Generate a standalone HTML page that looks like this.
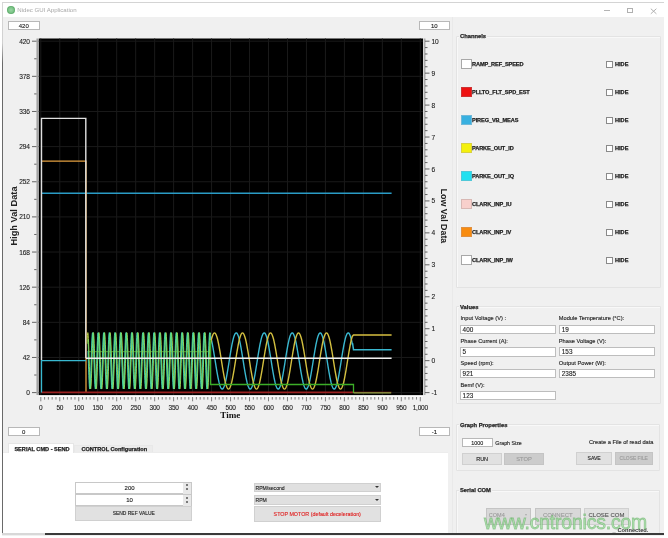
<!DOCTYPE html>
<html><head><meta charset="utf-8">
<style>
*{margin:0;padding:0;box-sizing:border-box}
html,body{width:668px;height:538px;overflow:hidden;background:#fff}
body{position:relative;font-family:"Liberation Sans",sans-serif;color:#222}
#all{position:absolute;left:0;top:0;width:668px;height:538px;filter:blur(0.5px)}
.abs{position:absolute}
#win{position:absolute;left:2px;top:2.5px;width:662px;height:533px;background:#f0f0f0;border-top:1px solid #cfcfcf}
#lb{position:absolute;left:2px;top:3px;width:1px;height:532px;background:linear-gradient(#d8d8d8 0px,#d0d0d0 40px,#6a6a6a 60px,#6a6a6a 100%)}
#title{position:absolute;left:0;top:3px;width:664px;height:14px;background:#fff}
.yl{position:absolute;left:12.5px;width:17.2px;text-align:right;font-size:6.6px;letter-spacing:-0.2px;line-height:9px;color:#1a1a1a;-webkit-text-stroke:0.1px #1a1a1a}
.yr{position:absolute;left:431.5px;width:20px;text-align:left;font-size:6.6px;letter-spacing:-0.2px;line-height:9px;color:#1a1a1a;-webkit-text-stroke:0.1px #1a1a1a}
.xl{position:absolute;top:402.5px;width:30px;text-align:center;font-size:6.5px;letter-spacing:-0.2px;line-height:9px;color:#1a1a1a;-webkit-text-stroke:0.1px #1a1a1a}
.inp{position:absolute;background:#fff;border:1px solid #b8b8b8;font-size:6px;line-height:8.6px;text-align:center;color:#222}
.grp{position:absolute;border:1px solid #e3e3e3;border-radius:1px;box-shadow:inset 1px 1px 0 #f8f8f8}
.gt{position:absolute;font-size:5.8px;font-weight:bold;color:#222;line-height:8px}
.ch{position:absolute;left:461px;width:180px;height:11px}
.sw{position:absolute;left:0;top:0;width:11px;height:10px;border:1px solid #a8a8a8}
.cn{position:absolute;left:11px;top:1.2px;font-size:5.6px;font-weight:bold;color:#222;line-height:8px;letter-spacing:-0.1px}
.cb{position:absolute;left:145px;top:1.5px;width:7px;height:7px;border:1px solid #8a8a8a;background:#fff}
.hd{position:absolute;left:154px;top:0.9px;font-size:5.6px;font-weight:bold;color:#222;line-height:8px}
.lab{position:absolute;font-size:5.7px;color:#222;line-height:8px;-webkit-text-stroke:0.15px #333}
.vb{position:absolute;background:#fff;border:1px solid #bdbdbd;font-size:6.4px;color:#222;line-height:8px;padding-left:1.6px}
.btn{position:absolute;background:#e1e1e1;border:1px solid #d0d0d0;font-size:6px;color:#222;text-align:center;line-height:11px}
.dis{background:#cccccc;color:#9a9a9a;border-color:#c4c4c4}
.cn,.hd,.gt,.tb{-webkit-text-stroke:0.25px #222}
.inp,.btn,.vb{-webkit-text-stroke:0.12px currentColor}
</style></head><body><div id="all">
<div id="win"></div>
<div id="title"></div><div id="lb"></div>
<div class="abs" style="left:2px;top:2px;width:662px;height:1px;background:#d4d4d4"></div>
<!-- title -->
<div class="abs" style="left:6.8px;top:6.2px;width:8px;height:8px;border-radius:50%;background:radial-gradient(circle,#9ad6a4 0,#7cc488 45%,#4a9e58 80%,#5aa868 100%)"></div>
<div class="abs" style="left:17.3px;top:5.2px;font-size:6.1px;line-height:9px;color:#a8a8a8">Nidec GUI Application</div>
<div class="abs" style="left:604px;top:10px;width:6px;height:1px;background:#b4b4b4"></div>
<div class="abs" style="left:627.3px;top:8.2px;width:5.8px;height:5px;border:1px solid #b0b0b0"></div>
<svg class="abs" style="left:650px;top:7.5px" width="8" height="7" viewBox="0 0 8 7"><path d="M0.8 0.7 L6.4 5.8 M6.4 0.7 L0.8 5.8" stroke="#a8a8a8" stroke-width="0.9"/></svg>
<!-- axis range inputs -->
<div class="inp" style="left:8px;top:21.3px;width:31.5px;height:9px">420</div>
<div class="inp" style="left:419px;top:21.3px;width:30.5px;height:9px">10</div>
<div class="inp" style="left:8px;top:427px;width:31.5px;height:9px">0</div>
<div class="inp" style="left:418.7px;top:427px;width:31.3px;height:9px">-1</div>
<svg class="abs" style="left:0;top:0" width="668" height="538" viewBox="0 0 668 538"><rect x="38.7" y="38.5" width="384.4" height="356.6" fill="#000"/><line x1="40.80" y1="38.5" x2="40.80" y2="395" stroke="#1a1a1a" stroke-width="1"/><line x1="59.77" y1="38.5" x2="59.77" y2="395" stroke="#1a1a1a" stroke-width="1"/><line x1="78.75" y1="38.5" x2="78.75" y2="395" stroke="#1a1a1a" stroke-width="1"/><line x1="97.72" y1="38.5" x2="97.72" y2="395" stroke="#1a1a1a" stroke-width="1"/><line x1="116.70" y1="38.5" x2="116.70" y2="395" stroke="#1a1a1a" stroke-width="1"/><line x1="135.68" y1="38.5" x2="135.68" y2="395" stroke="#1a1a1a" stroke-width="1"/><line x1="154.65" y1="38.5" x2="154.65" y2="395" stroke="#1a1a1a" stroke-width="1"/><line x1="173.62" y1="38.5" x2="173.62" y2="395" stroke="#1a1a1a" stroke-width="1"/><line x1="192.60" y1="38.5" x2="192.60" y2="395" stroke="#1a1a1a" stroke-width="1"/><line x1="211.57" y1="38.5" x2="211.57" y2="395" stroke="#1a1a1a" stroke-width="1"/><line x1="230.55" y1="38.5" x2="230.55" y2="395" stroke="#1a1a1a" stroke-width="1"/><line x1="249.52" y1="38.5" x2="249.52" y2="395" stroke="#1a1a1a" stroke-width="1"/><line x1="268.50" y1="38.5" x2="268.50" y2="395" stroke="#1a1a1a" stroke-width="1"/><line x1="287.48" y1="38.5" x2="287.48" y2="395" stroke="#1a1a1a" stroke-width="1"/><line x1="306.45" y1="38.5" x2="306.45" y2="395" stroke="#1a1a1a" stroke-width="1"/><line x1="325.43" y1="38.5" x2="325.43" y2="395" stroke="#1a1a1a" stroke-width="1"/><line x1="344.40" y1="38.5" x2="344.40" y2="395" stroke="#1a1a1a" stroke-width="1"/><line x1="363.38" y1="38.5" x2="363.38" y2="395" stroke="#1a1a1a" stroke-width="1"/><line x1="382.35" y1="38.5" x2="382.35" y2="395" stroke="#1a1a1a" stroke-width="1"/><line x1="401.32" y1="38.5" x2="401.32" y2="395" stroke="#1a1a1a" stroke-width="1"/><line x1="420.30" y1="38.5" x2="420.30" y2="395" stroke="#1a1a1a" stroke-width="1"/><line x1="38.7" y1="392.60" x2="423" y2="392.60" stroke="#1a1a1a" stroke-width="1"/><line x1="38.7" y1="357.46" x2="423" y2="357.46" stroke="#1a1a1a" stroke-width="1"/><line x1="38.7" y1="322.32" x2="423" y2="322.32" stroke="#1a1a1a" stroke-width="1"/><line x1="38.7" y1="287.18" x2="423" y2="287.18" stroke="#1a1a1a" stroke-width="1"/><line x1="38.7" y1="252.04" x2="423" y2="252.04" stroke="#1a1a1a" stroke-width="1"/><line x1="38.7" y1="216.90" x2="423" y2="216.90" stroke="#1a1a1a" stroke-width="1"/><line x1="38.7" y1="181.76" x2="423" y2="181.76" stroke="#1a1a1a" stroke-width="1"/><line x1="38.7" y1="146.62" x2="423" y2="146.62" stroke="#1a1a1a" stroke-width="1"/><line x1="38.7" y1="111.48" x2="423" y2="111.48" stroke="#1a1a1a" stroke-width="1"/><line x1="38.7" y1="76.34" x2="423" y2="76.34" stroke="#1a1a1a" stroke-width="1"/><line x1="38.7" y1="41.20" x2="423" y2="41.20" stroke="#1a1a1a" stroke-width="1"/><line x1="37.2" y1="38.5" x2="37.2" y2="395" stroke="#9a9a9a" stroke-width="1.4"/><line x1="32" y1="392.60" x2="36.5" y2="392.60" stroke="#555" stroke-width="0.9"/><line x1="34.2" y1="375.03" x2="36.5" y2="375.03" stroke="#555" stroke-width="0.9"/><line x1="32" y1="357.46" x2="36.5" y2="357.46" stroke="#555" stroke-width="0.9"/><line x1="34.2" y1="339.89" x2="36.5" y2="339.89" stroke="#555" stroke-width="0.9"/><line x1="32" y1="322.32" x2="36.5" y2="322.32" stroke="#555" stroke-width="0.9"/><line x1="34.2" y1="304.75" x2="36.5" y2="304.75" stroke="#555" stroke-width="0.9"/><line x1="32" y1="287.18" x2="36.5" y2="287.18" stroke="#555" stroke-width="0.9"/><line x1="34.2" y1="269.61" x2="36.5" y2="269.61" stroke="#555" stroke-width="0.9"/><line x1="32" y1="252.04" x2="36.5" y2="252.04" stroke="#555" stroke-width="0.9"/><line x1="34.2" y1="234.47" x2="36.5" y2="234.47" stroke="#555" stroke-width="0.9"/><line x1="32" y1="216.90" x2="36.5" y2="216.90" stroke="#555" stroke-width="0.9"/><line x1="34.2" y1="199.33" x2="36.5" y2="199.33" stroke="#555" stroke-width="0.9"/><line x1="32" y1="181.76" x2="36.5" y2="181.76" stroke="#555" stroke-width="0.9"/><line x1="34.2" y1="164.19" x2="36.5" y2="164.19" stroke="#555" stroke-width="0.9"/><line x1="32" y1="146.62" x2="36.5" y2="146.62" stroke="#555" stroke-width="0.9"/><line x1="34.2" y1="129.05" x2="36.5" y2="129.05" stroke="#555" stroke-width="0.9"/><line x1="32" y1="111.48" x2="36.5" y2="111.48" stroke="#555" stroke-width="0.9"/><line x1="34.2" y1="93.91" x2="36.5" y2="93.91" stroke="#555" stroke-width="0.9"/><line x1="32" y1="76.34" x2="36.5" y2="76.34" stroke="#555" stroke-width="0.9"/><line x1="34.2" y1="58.77" x2="36.5" y2="58.77" stroke="#555" stroke-width="0.9"/><line x1="32" y1="41.20" x2="36.5" y2="41.20" stroke="#555" stroke-width="0.9"/><line x1="424.8" y1="38.5" x2="424.8" y2="395" stroke="#9a9a9a" stroke-width="1.2"/><line x1="425" y1="392.60" x2="429.5" y2="392.60" stroke="#555" stroke-width="0.9"/><line x1="425" y1="386.21" x2="427.5" y2="386.21" stroke="#555" stroke-width="0.9"/><line x1="425" y1="379.82" x2="427.5" y2="379.82" stroke="#555" stroke-width="0.9"/><line x1="425" y1="373.43" x2="427.5" y2="373.43" stroke="#555" stroke-width="0.9"/><line x1="425" y1="367.04" x2="427.5" y2="367.04" stroke="#555" stroke-width="0.9"/><line x1="425" y1="360.65" x2="429.5" y2="360.65" stroke="#555" stroke-width="0.9"/><line x1="425" y1="354.27" x2="427.5" y2="354.27" stroke="#555" stroke-width="0.9"/><line x1="425" y1="347.88" x2="427.5" y2="347.88" stroke="#555" stroke-width="0.9"/><line x1="425" y1="341.49" x2="427.5" y2="341.49" stroke="#555" stroke-width="0.9"/><line x1="425" y1="335.10" x2="427.5" y2="335.10" stroke="#555" stroke-width="0.9"/><line x1="425" y1="328.71" x2="429.5" y2="328.71" stroke="#555" stroke-width="0.9"/><line x1="425" y1="322.32" x2="427.5" y2="322.32" stroke="#555" stroke-width="0.9"/><line x1="425" y1="315.93" x2="427.5" y2="315.93" stroke="#555" stroke-width="0.9"/><line x1="425" y1="309.54" x2="427.5" y2="309.54" stroke="#555" stroke-width="0.9"/><line x1="425" y1="303.15" x2="427.5" y2="303.15" stroke="#555" stroke-width="0.9"/><line x1="425" y1="296.76" x2="429.5" y2="296.76" stroke="#555" stroke-width="0.9"/><line x1="425" y1="290.37" x2="427.5" y2="290.37" stroke="#555" stroke-width="0.9"/><line x1="425" y1="283.99" x2="427.5" y2="283.99" stroke="#555" stroke-width="0.9"/><line x1="425" y1="277.60" x2="427.5" y2="277.60" stroke="#555" stroke-width="0.9"/><line x1="425" y1="271.21" x2="427.5" y2="271.21" stroke="#555" stroke-width="0.9"/><line x1="425" y1="264.82" x2="429.5" y2="264.82" stroke="#555" stroke-width="0.9"/><line x1="425" y1="258.43" x2="427.5" y2="258.43" stroke="#555" stroke-width="0.9"/><line x1="425" y1="252.04" x2="427.5" y2="252.04" stroke="#555" stroke-width="0.9"/><line x1="425" y1="245.65" x2="427.5" y2="245.65" stroke="#555" stroke-width="0.9"/><line x1="425" y1="239.26" x2="427.5" y2="239.26" stroke="#555" stroke-width="0.9"/><line x1="425" y1="232.87" x2="429.5" y2="232.87" stroke="#555" stroke-width="0.9"/><line x1="425" y1="226.48" x2="427.5" y2="226.48" stroke="#555" stroke-width="0.9"/><line x1="425" y1="220.09" x2="427.5" y2="220.09" stroke="#555" stroke-width="0.9"/><line x1="425" y1="213.71" x2="427.5" y2="213.71" stroke="#555" stroke-width="0.9"/><line x1="425" y1="207.32" x2="427.5" y2="207.32" stroke="#555" stroke-width="0.9"/><line x1="425" y1="200.93" x2="429.5" y2="200.93" stroke="#555" stroke-width="0.9"/><line x1="425" y1="194.54" x2="427.5" y2="194.54" stroke="#555" stroke-width="0.9"/><line x1="425" y1="188.15" x2="427.5" y2="188.15" stroke="#555" stroke-width="0.9"/><line x1="425" y1="181.76" x2="427.5" y2="181.76" stroke="#555" stroke-width="0.9"/><line x1="425" y1="175.37" x2="427.5" y2="175.37" stroke="#555" stroke-width="0.9"/><line x1="425" y1="168.98" x2="429.5" y2="168.98" stroke="#555" stroke-width="0.9"/><line x1="425" y1="162.59" x2="427.5" y2="162.59" stroke="#555" stroke-width="0.9"/><line x1="425" y1="156.20" x2="427.5" y2="156.20" stroke="#555" stroke-width="0.9"/><line x1="425" y1="149.81" x2="427.5" y2="149.81" stroke="#555" stroke-width="0.9"/><line x1="425" y1="143.43" x2="427.5" y2="143.43" stroke="#555" stroke-width="0.9"/><line x1="425" y1="137.04" x2="429.5" y2="137.04" stroke="#555" stroke-width="0.9"/><line x1="425" y1="130.65" x2="427.5" y2="130.65" stroke="#555" stroke-width="0.9"/><line x1="425" y1="124.26" x2="427.5" y2="124.26" stroke="#555" stroke-width="0.9"/><line x1="425" y1="117.87" x2="427.5" y2="117.87" stroke="#555" stroke-width="0.9"/><line x1="425" y1="111.48" x2="427.5" y2="111.48" stroke="#555" stroke-width="0.9"/><line x1="425" y1="105.09" x2="429.5" y2="105.09" stroke="#555" stroke-width="0.9"/><line x1="425" y1="98.70" x2="427.5" y2="98.70" stroke="#555" stroke-width="0.9"/><line x1="425" y1="92.31" x2="427.5" y2="92.31" stroke="#555" stroke-width="0.9"/><line x1="425" y1="85.92" x2="427.5" y2="85.92" stroke="#555" stroke-width="0.9"/><line x1="425" y1="79.53" x2="427.5" y2="79.53" stroke="#555" stroke-width="0.9"/><line x1="425" y1="73.15" x2="429.5" y2="73.15" stroke="#555" stroke-width="0.9"/><line x1="425" y1="66.76" x2="427.5" y2="66.76" stroke="#555" stroke-width="0.9"/><line x1="425" y1="60.37" x2="427.5" y2="60.37" stroke="#555" stroke-width="0.9"/><line x1="425" y1="53.98" x2="427.5" y2="53.98" stroke="#555" stroke-width="0.9"/><line x1="425" y1="47.59" x2="427.5" y2="47.59" stroke="#555" stroke-width="0.9"/><line x1="425" y1="41.20" x2="429.5" y2="41.20" stroke="#555" stroke-width="0.9"/><line x1="38.7" y1="396.3" x2="423" y2="396.3" stroke="#fcfcfc" stroke-width="1.2"/><line x1="40.80" y1="397" x2="40.80" y2="401.3" stroke="#777" stroke-width="0.9"/><line x1="44.59" y1="397" x2="44.59" y2="399.6" stroke="#777" stroke-width="0.9"/><line x1="48.39" y1="397" x2="48.39" y2="399.6" stroke="#777" stroke-width="0.9"/><line x1="52.18" y1="397" x2="52.18" y2="399.6" stroke="#777" stroke-width="0.9"/><line x1="55.98" y1="397" x2="55.98" y2="399.6" stroke="#777" stroke-width="0.9"/><line x1="59.77" y1="397" x2="59.77" y2="401.3" stroke="#777" stroke-width="0.9"/><line x1="63.57" y1="397" x2="63.57" y2="399.6" stroke="#777" stroke-width="0.9"/><line x1="67.36" y1="397" x2="67.36" y2="399.6" stroke="#777" stroke-width="0.9"/><line x1="71.16" y1="397" x2="71.16" y2="399.6" stroke="#777" stroke-width="0.9"/><line x1="74.95" y1="397" x2="74.95" y2="399.6" stroke="#777" stroke-width="0.9"/><line x1="78.75" y1="397" x2="78.75" y2="401.3" stroke="#777" stroke-width="0.9"/><line x1="82.54" y1="397" x2="82.54" y2="399.6" stroke="#777" stroke-width="0.9"/><line x1="86.34" y1="397" x2="86.34" y2="399.6" stroke="#777" stroke-width="0.9"/><line x1="90.13" y1="397" x2="90.13" y2="399.6" stroke="#777" stroke-width="0.9"/><line x1="93.93" y1="397" x2="93.93" y2="399.6" stroke="#777" stroke-width="0.9"/><line x1="97.72" y1="397" x2="97.72" y2="401.3" stroke="#777" stroke-width="0.9"/><line x1="101.52" y1="397" x2="101.52" y2="399.6" stroke="#777" stroke-width="0.9"/><line x1="105.31" y1="397" x2="105.31" y2="399.6" stroke="#777" stroke-width="0.9"/><line x1="109.11" y1="397" x2="109.11" y2="399.6" stroke="#777" stroke-width="0.9"/><line x1="112.91" y1="397" x2="112.91" y2="399.6" stroke="#777" stroke-width="0.9"/><line x1="116.70" y1="397" x2="116.70" y2="401.3" stroke="#777" stroke-width="0.9"/><line x1="120.50" y1="397" x2="120.50" y2="399.6" stroke="#777" stroke-width="0.9"/><line x1="124.29" y1="397" x2="124.29" y2="399.6" stroke="#777" stroke-width="0.9"/><line x1="128.08" y1="397" x2="128.08" y2="399.6" stroke="#777" stroke-width="0.9"/><line x1="131.88" y1="397" x2="131.88" y2="399.6" stroke="#777" stroke-width="0.9"/><line x1="135.68" y1="397" x2="135.68" y2="401.3" stroke="#777" stroke-width="0.9"/><line x1="139.47" y1="397" x2="139.47" y2="399.6" stroke="#777" stroke-width="0.9"/><line x1="143.26" y1="397" x2="143.26" y2="399.6" stroke="#777" stroke-width="0.9"/><line x1="147.06" y1="397" x2="147.06" y2="399.6" stroke="#777" stroke-width="0.9"/><line x1="150.86" y1="397" x2="150.86" y2="399.6" stroke="#777" stroke-width="0.9"/><line x1="154.65" y1="397" x2="154.65" y2="401.3" stroke="#777" stroke-width="0.9"/><line x1="158.44" y1="397" x2="158.44" y2="399.6" stroke="#777" stroke-width="0.9"/><line x1="162.24" y1="397" x2="162.24" y2="399.6" stroke="#777" stroke-width="0.9"/><line x1="166.03" y1="397" x2="166.03" y2="399.6" stroke="#777" stroke-width="0.9"/><line x1="169.83" y1="397" x2="169.83" y2="399.6" stroke="#777" stroke-width="0.9"/><line x1="173.62" y1="397" x2="173.62" y2="401.3" stroke="#777" stroke-width="0.9"/><line x1="177.42" y1="397" x2="177.42" y2="399.6" stroke="#777" stroke-width="0.9"/><line x1="181.21" y1="397" x2="181.21" y2="399.6" stroke="#777" stroke-width="0.9"/><line x1="185.01" y1="397" x2="185.01" y2="399.6" stroke="#777" stroke-width="0.9"/><line x1="188.81" y1="397" x2="188.81" y2="399.6" stroke="#777" stroke-width="0.9"/><line x1="192.60" y1="397" x2="192.60" y2="401.3" stroke="#777" stroke-width="0.9"/><line x1="196.39" y1="397" x2="196.39" y2="399.6" stroke="#777" stroke-width="0.9"/><line x1="200.19" y1="397" x2="200.19" y2="399.6" stroke="#777" stroke-width="0.9"/><line x1="203.99" y1="397" x2="203.99" y2="399.6" stroke="#777" stroke-width="0.9"/><line x1="207.78" y1="397" x2="207.78" y2="399.6" stroke="#777" stroke-width="0.9"/><line x1="211.57" y1="397" x2="211.57" y2="401.3" stroke="#777" stroke-width="0.9"/><line x1="215.37" y1="397" x2="215.37" y2="399.6" stroke="#777" stroke-width="0.9"/><line x1="219.17" y1="397" x2="219.17" y2="399.6" stroke="#777" stroke-width="0.9"/><line x1="222.96" y1="397" x2="222.96" y2="399.6" stroke="#777" stroke-width="0.9"/><line x1="226.75" y1="397" x2="226.75" y2="399.6" stroke="#777" stroke-width="0.9"/><line x1="230.55" y1="397" x2="230.55" y2="401.3" stroke="#777" stroke-width="0.9"/><line x1="234.35" y1="397" x2="234.35" y2="399.6" stroke="#777" stroke-width="0.9"/><line x1="238.14" y1="397" x2="238.14" y2="399.6" stroke="#777" stroke-width="0.9"/><line x1="241.94" y1="397" x2="241.94" y2="399.6" stroke="#777" stroke-width="0.9"/><line x1="245.73" y1="397" x2="245.73" y2="399.6" stroke="#777" stroke-width="0.9"/><line x1="249.52" y1="397" x2="249.52" y2="401.3" stroke="#777" stroke-width="0.9"/><line x1="253.32" y1="397" x2="253.32" y2="399.6" stroke="#777" stroke-width="0.9"/><line x1="257.12" y1="397" x2="257.12" y2="399.6" stroke="#777" stroke-width="0.9"/><line x1="260.91" y1="397" x2="260.91" y2="399.6" stroke="#777" stroke-width="0.9"/><line x1="264.70" y1="397" x2="264.70" y2="399.6" stroke="#777" stroke-width="0.9"/><line x1="268.50" y1="397" x2="268.50" y2="401.3" stroke="#777" stroke-width="0.9"/><line x1="272.30" y1="397" x2="272.30" y2="399.6" stroke="#777" stroke-width="0.9"/><line x1="276.09" y1="397" x2="276.09" y2="399.6" stroke="#777" stroke-width="0.9"/><line x1="279.88" y1="397" x2="279.88" y2="399.6" stroke="#777" stroke-width="0.9"/><line x1="283.68" y1="397" x2="283.68" y2="399.6" stroke="#777" stroke-width="0.9"/><line x1="287.48" y1="397" x2="287.48" y2="401.3" stroke="#777" stroke-width="0.9"/><line x1="291.27" y1="397" x2="291.27" y2="399.6" stroke="#777" stroke-width="0.9"/><line x1="295.06" y1="397" x2="295.06" y2="399.6" stroke="#777" stroke-width="0.9"/><line x1="298.86" y1="397" x2="298.86" y2="399.6" stroke="#777" stroke-width="0.9"/><line x1="302.66" y1="397" x2="302.66" y2="399.6" stroke="#777" stroke-width="0.9"/><line x1="306.45" y1="397" x2="306.45" y2="401.3" stroke="#777" stroke-width="0.9"/><line x1="310.25" y1="397" x2="310.25" y2="399.6" stroke="#777" stroke-width="0.9"/><line x1="314.04" y1="397" x2="314.04" y2="399.6" stroke="#777" stroke-width="0.9"/><line x1="317.84" y1="397" x2="317.84" y2="399.6" stroke="#777" stroke-width="0.9"/><line x1="321.63" y1="397" x2="321.63" y2="399.6" stroke="#777" stroke-width="0.9"/><line x1="325.43" y1="397" x2="325.43" y2="401.3" stroke="#777" stroke-width="0.9"/><line x1="329.22" y1="397" x2="329.22" y2="399.6" stroke="#777" stroke-width="0.9"/><line x1="333.01" y1="397" x2="333.01" y2="399.6" stroke="#777" stroke-width="0.9"/><line x1="336.81" y1="397" x2="336.81" y2="399.6" stroke="#777" stroke-width="0.9"/><line x1="340.61" y1="397" x2="340.61" y2="399.6" stroke="#777" stroke-width="0.9"/><line x1="344.40" y1="397" x2="344.40" y2="401.3" stroke="#777" stroke-width="0.9"/><line x1="348.19" y1="397" x2="348.19" y2="399.6" stroke="#777" stroke-width="0.9"/><line x1="351.99" y1="397" x2="351.99" y2="399.6" stroke="#777" stroke-width="0.9"/><line x1="355.79" y1="397" x2="355.79" y2="399.6" stroke="#777" stroke-width="0.9"/><line x1="359.58" y1="397" x2="359.58" y2="399.6" stroke="#777" stroke-width="0.9"/><line x1="363.38" y1="397" x2="363.38" y2="401.3" stroke="#777" stroke-width="0.9"/><line x1="367.17" y1="397" x2="367.17" y2="399.6" stroke="#777" stroke-width="0.9"/><line x1="370.97" y1="397" x2="370.97" y2="399.6" stroke="#777" stroke-width="0.9"/><line x1="374.76" y1="397" x2="374.76" y2="399.6" stroke="#777" stroke-width="0.9"/><line x1="378.56" y1="397" x2="378.56" y2="399.6" stroke="#777" stroke-width="0.9"/><line x1="382.35" y1="397" x2="382.35" y2="401.3" stroke="#777" stroke-width="0.9"/><line x1="386.15" y1="397" x2="386.15" y2="399.6" stroke="#777" stroke-width="0.9"/><line x1="389.94" y1="397" x2="389.94" y2="399.6" stroke="#777" stroke-width="0.9"/><line x1="393.74" y1="397" x2="393.74" y2="399.6" stroke="#777" stroke-width="0.9"/><line x1="397.53" y1="397" x2="397.53" y2="399.6" stroke="#777" stroke-width="0.9"/><line x1="401.32" y1="397" x2="401.32" y2="401.3" stroke="#777" stroke-width="0.9"/><line x1="405.12" y1="397" x2="405.12" y2="399.6" stroke="#777" stroke-width="0.9"/><line x1="408.92" y1="397" x2="408.92" y2="399.6" stroke="#777" stroke-width="0.9"/><line x1="412.71" y1="397" x2="412.71" y2="399.6" stroke="#777" stroke-width="0.9"/><line x1="416.50" y1="397" x2="416.50" y2="399.6" stroke="#777" stroke-width="0.9"/><line x1="420.30" y1="397" x2="420.30" y2="401.3" stroke="#777" stroke-width="0.9"/><polyline points="41.5,193.3 391.6,193.3" stroke="#2a9cc6" stroke-width="1.6" fill="none"/><polyline points="41.5,161.2 86,161.2 86,392.5" stroke="#e4a040" stroke-width="1.3" fill="none"/><polyline points="41.5,392.3 353,392.3" stroke="#9a2020" stroke-width="1.7" fill="none"/><polyline points="353,392.3 391.5,392.3" stroke="#4a1010" stroke-width="1.5" fill="none"/><polyline points="41.5,392.5 41.5,360.6 86,360.6" stroke="#38b8d0" stroke-width="1.3" fill="none"/><polyline points="41.5,360 41.5,118.4 85.8,118.4 85.8,358.3" stroke="#e0e0e0" stroke-width="1.4" fill="none"/><polyline points="87.00,343.79 87.20,339.20 87.40,335.70 87.60,333.46 87.80,332.61 88.00,333.18 88.20,335.14 88.40,338.40 88.60,342.80 88.80,348.10 89.00,354.04 89.20,360.32 89.40,366.63 89.60,372.65 89.80,378.06 90.00,382.61 90.20,386.05 90.40,388.22 90.60,389.00 90.80,388.36 91.00,386.32 91.20,383.00 91.40,378.56 91.60,373.22 91.80,367.25 92.00,360.96 92.20,354.66 92.40,348.67 92.60,343.29 92.80,338.79 93.00,335.41 93.20,333.31 93.40,332.60 93.60,333.31 93.80,335.41 94.00,338.79 94.20,343.29 94.40,348.67 94.60,354.66 94.80,360.96 95.00,367.25 95.20,373.22 95.40,378.56 95.60,383.00 95.80,386.32 96.00,388.36 96.20,389.00 96.40,388.22 96.60,386.05 96.80,382.61 97.00,378.06 97.20,372.65 97.40,366.63 97.60,360.32 97.80,354.04 98.00,348.10 98.20,342.80 98.40,338.40 98.60,335.14 98.80,333.18 99.00,332.61 99.20,333.46 99.40,335.70 99.60,339.20 99.80,343.79 100.00,349.24 100.20,355.28 100.40,361.59 100.60,367.87 100.80,373.79 101.00,379.05 101.20,383.39 101.40,386.59 101.60,388.48 101.80,388.98 102.00,388.06 102.20,385.76 102.40,382.20 102.60,377.55 102.80,372.07 103.00,366.01 103.20,359.69 103.40,353.42 103.60,347.53 103.80,342.31 104.00,338.02 104.20,334.89 104.40,333.06 104.60,332.63 104.80,333.62 105.00,335.99 105.20,339.61 105.40,344.30 105.60,349.83 105.80,355.90 106.00,362.23 106.20,368.48 106.40,374.35 106.60,379.53 106.80,383.76 107.00,386.84 107.20,388.60 107.40,388.96 107.60,387.89 107.80,385.46 108.00,381.78 108.20,377.04 108.40,371.48 108.60,365.38 108.80,359.05 109.00,352.81 109.20,346.98 109.40,341.84 109.60,337.65 109.80,334.64 110.00,332.95 110.20,332.66 110.40,333.80 110.60,336.30 110.80,340.04 111.00,344.82 111.20,350.41 111.40,356.53 111.60,362.86 111.80,369.09 112.00,374.90 112.20,380.00 112.40,384.13 112.60,387.08 112.80,388.70 113.00,388.91 113.20,387.71 113.40,385.14 113.60,381.35 113.80,376.52 114.00,370.89 114.20,364.76 114.40,358.42 114.60,352.21 114.80,346.43 115.00,341.37 115.20,337.30 115.40,334.41 115.60,332.86 115.80,332.71 116.00,333.99 116.20,336.62 116.40,340.47 116.60,345.35 116.80,351.01 117.00,357.16 117.20,363.49 117.40,369.70 117.60,375.45 117.80,380.46 118.00,384.48 118.20,387.30 118.40,388.78 118.60,388.86 118.80,387.51 119.00,384.82 119.20,380.91 119.40,375.99 119.60,370.30 119.80,364.13 120.00,357.79 120.20,351.60 120.40,345.88 120.60,340.92 120.80,336.95 121.00,334.19 121.20,332.78 121.40,332.78 121.60,334.19 121.80,336.95 122.00,340.92 122.20,345.88 122.40,351.60 122.60,357.79 122.80,364.13 123.00,370.30 123.20,375.99 123.40,380.91 123.60,384.82 123.80,387.51 124.00,388.86 124.20,388.78 124.40,387.30 124.60,384.48 124.80,380.46 125.00,375.45 125.20,369.70 125.40,363.49 125.60,357.16 125.80,351.01 126.00,345.35 126.20,340.47 126.40,336.62 126.60,333.99 126.80,332.71 127.00,332.86 127.20,334.41 127.40,337.30 127.60,341.37 127.80,346.43 128.00,352.21 128.20,358.42 128.40,364.76 128.60,370.89 128.80,376.52 129.00,381.35 129.20,385.14 129.40,387.71 129.60,388.91 129.80,388.70 130.00,387.08 130.20,384.13 130.40,380.00 130.60,374.90 130.80,369.09 131.00,362.86 131.20,356.53 131.40,350.41 131.60,344.82 131.80,340.04 132.00,336.30 132.20,333.80 132.40,332.66 132.60,332.95 132.80,334.64 133.00,337.65 133.20,341.84 133.40,346.98 133.60,352.81 133.80,359.05 134.00,365.38 134.20,371.48 134.40,377.04 134.60,381.78 134.80,385.46 135.00,387.89 135.20,388.96 135.40,388.60 135.60,386.84 135.80,383.76 136.00,379.53 136.20,374.35 136.40,368.48 136.60,362.23 136.80,355.90 137.00,349.83 137.20,344.30 137.40,339.61 137.60,335.99 137.80,333.62 138.00,332.63 138.20,333.06 138.40,334.89 138.60,338.02 138.80,342.31 139.00,347.53 139.20,353.42 139.40,359.69 139.60,366.01 139.80,372.07 140.00,377.55 140.20,382.20 140.40,385.76 140.60,388.06 140.80,388.98 141.00,388.48 141.20,386.59 141.40,383.39 141.60,379.05 141.80,373.79 142.00,367.87 142.20,361.59 142.40,355.28 142.60,349.24 142.80,343.79 143.00,339.20 143.20,335.70 143.40,333.46 143.60,332.61 143.80,333.18 144.00,335.14 144.20,338.40 144.40,342.80 144.60,348.10 144.80,354.04 145.00,360.32 145.20,366.63 145.40,372.65 145.60,378.06 145.80,382.61 146.00,386.05 146.20,388.22 146.40,389.00 146.60,388.36 146.80,386.32 147.00,383.00 147.20,378.56 147.40,373.22 147.60,367.25 147.80,360.96 148.00,354.66 148.20,348.67 148.40,343.29 148.60,338.79 148.80,335.41 149.00,333.31 149.20,332.60 149.40,333.31 149.60,335.41 149.80,338.79 150.00,343.29 150.20,348.67 150.40,354.66 150.60,360.96 150.80,367.25 151.00,373.22 151.20,378.56 151.40,383.00 151.60,386.32 151.80,388.36 152.00,389.00 152.20,388.22 152.40,386.05 152.60,382.61 152.80,378.06 153.00,372.65 153.20,366.63 153.40,360.32 153.60,354.04 153.80,348.10 154.00,342.80 154.20,338.40 154.40,335.14 154.60,333.18 154.80,332.61 155.00,333.46 155.20,335.70 155.40,339.20 155.60,343.79 155.80,349.24 156.00,355.28 156.20,361.59 156.40,367.87 156.60,373.79 156.80,379.05 157.00,383.39 157.20,386.59 157.40,388.48 157.60,388.98 157.80,388.06 158.00,385.76 158.20,382.20 158.40,377.55 158.60,372.07 158.80,366.01 159.00,359.69 159.20,353.42 159.40,347.53 159.60,342.31 159.80,338.02 160.00,334.89 160.20,333.06 160.40,332.63 160.60,333.62 160.80,335.99 161.00,339.61 161.20,344.30 161.40,349.83 161.60,355.90 161.80,362.23 162.00,368.48 162.20,374.35 162.40,379.53 162.60,383.76 162.80,386.84 163.00,388.60 163.20,388.96 163.40,387.89 163.60,385.46 163.80,381.78 164.00,377.04 164.20,371.48 164.40,365.38 164.60,359.05 164.80,352.81 165.00,346.98 165.20,341.84 165.40,337.65 165.60,334.64 165.80,332.95 166.00,332.66 166.20,333.80 166.40,336.30 166.60,340.04 166.80,344.82 167.00,350.41 167.20,356.53 167.40,362.86 167.60,369.09 167.80,374.90 168.00,380.00 168.20,384.13 168.40,387.08 168.60,388.70 168.80,388.91 169.00,387.71 169.20,385.14 169.40,381.35 169.60,376.52 169.80,370.89 170.00,364.76 170.20,358.42 170.40,352.21 170.60,346.43 170.80,341.37 171.00,337.30 171.20,334.41 171.40,332.86 171.60,332.71 171.80,333.99 172.00,336.62 172.20,340.47 172.40,345.35 172.60,351.01 172.80,357.16 173.00,363.49 173.20,369.70 173.40,375.45 173.60,380.46 173.80,384.48 174.00,387.30 174.20,388.78 174.40,388.86 174.60,387.51 174.80,384.82 175.00,380.91 175.20,375.99 175.40,370.30 175.60,364.13 175.80,357.79 176.00,351.60 176.20,345.88 176.40,340.92 176.60,336.95 176.80,334.19 177.00,332.78 177.20,332.78 177.40,334.19 177.60,336.95 177.80,340.92 178.00,345.88 178.20,351.60 178.40,357.79 178.60,364.13 178.80,370.30 179.00,375.99 179.20,380.91 179.40,384.82 179.60,387.51 179.80,388.86 180.00,388.78 180.20,387.30 180.40,384.48 180.60,380.46 180.80,375.45 181.00,369.70 181.20,363.49 181.40,357.16 181.60,351.01 181.80,345.35 182.00,340.47 182.20,336.62 182.40,333.99 182.60,332.71 182.80,332.86 183.00,334.41 183.20,337.30 183.40,341.37 183.60,346.43 183.80,352.21 184.00,358.42 184.20,364.76 184.40,370.89 184.60,376.52 184.80,381.35 185.00,385.14 185.20,387.71 185.40,388.91 185.60,388.70 185.80,387.08 186.00,384.13 186.20,380.00 186.40,374.90 186.60,369.09 186.80,362.86 187.00,356.53 187.20,350.41 187.40,344.82 187.60,340.04 187.80,336.30 188.00,333.80 188.20,332.66 188.40,332.95 188.60,334.64 188.80,337.65 189.00,341.84 189.20,346.98 189.40,352.81 189.60,359.05 189.80,365.38 190.00,371.48 190.20,377.04 190.40,381.78 190.60,385.46 190.80,387.89 191.00,388.96 191.20,388.60 191.40,386.84 191.60,383.76 191.80,379.53 192.00,374.35 192.20,368.48 192.40,362.23 192.60,355.90 192.80,349.83 193.00,344.30 193.20,339.61 193.40,335.99 193.60,333.62 193.80,332.63 194.00,333.06 194.20,334.89 194.40,338.02 194.60,342.31 194.80,347.53 195.00,353.42 195.20,359.69 195.40,366.01 195.60,372.07 195.80,377.55 196.00,382.20 196.20,385.76 196.40,388.06 196.60,388.98 196.80,388.48 197.00,386.59 197.20,383.39 197.40,379.05 197.60,373.79 197.80,367.87 198.00,361.59 198.20,355.28 198.40,349.24 198.60,343.79 198.80,339.20 199.00,335.70 199.20,333.46 199.40,332.61 199.60,333.18 199.80,335.14 200.00,338.40 200.20,342.80 200.40,348.10 200.60,354.04 200.80,360.32 201.00,366.63 201.20,372.65 201.40,378.06 201.60,382.61 201.80,386.05 202.00,388.22 202.20,389.00 202.40,388.36 202.60,386.32 202.80,383.00 203.00,378.56 203.20,373.22 203.40,367.25 203.60,360.96 203.80,354.66 204.00,348.67 204.20,343.29 204.40,338.79 204.60,335.41 204.80,333.31 205.00,332.60 205.20,333.31 205.40,335.41 205.60,338.79 205.80,343.29 206.00,348.67 206.20,354.66 206.40,360.96 206.60,367.25 206.80,373.22 207.00,378.56 207.20,383.00 207.40,386.32 207.60,388.36 207.80,389.00 208.00,388.22 208.20,386.05 208.40,382.61 208.60,378.06 208.80,372.65 209.00,366.63 209.20,360.32 209.40,354.04 209.60,348.10 209.80,342.80 210.00,338.40 210.20,335.14 210.40,333.18" stroke="#c0d848" stroke-width="0.9" fill="none"/><polyline points="88.00,351.01 88.20,357.16 88.40,363.49 88.60,369.70 88.80,375.45 89.00,380.46 89.20,384.48 89.40,387.30 89.60,388.78 89.80,388.86 90.00,387.51 90.20,384.82 90.40,380.91 90.60,375.99 90.80,370.30 91.00,364.13 91.20,357.79 91.40,351.60 91.60,345.88 91.80,340.92 92.00,336.95 92.20,334.19 92.40,332.78 92.60,332.78 92.80,334.19 93.00,336.95 93.20,340.92 93.40,345.88 93.60,351.60 93.80,357.79 94.00,364.13 94.20,370.30 94.40,375.99 94.60,380.91 94.80,384.82 95.00,387.51 95.20,388.86 95.40,388.78 95.60,387.30 95.80,384.48 96.00,380.46 96.20,375.45 96.40,369.70 96.60,363.49 96.80,357.16 97.00,351.01 97.20,345.35 97.40,340.47 97.60,336.62 97.80,333.99 98.00,332.71 98.20,332.86 98.40,334.41 98.60,337.30 98.80,341.37 99.00,346.43 99.20,352.21 99.40,358.42 99.60,364.76 99.80,370.89 100.00,376.52 100.20,381.35 100.40,385.14 100.60,387.71 100.80,388.91 101.00,388.70 101.20,387.08 101.40,384.13 101.60,380.00 101.80,374.90 102.00,369.09 102.20,362.86 102.40,356.53 102.60,350.41 102.80,344.82 103.00,340.04 103.20,336.30 103.40,333.80 103.60,332.66 103.80,332.95 104.00,334.64 104.20,337.65 104.40,341.84 104.60,346.98 104.80,352.81 105.00,359.05 105.20,365.38 105.40,371.48 105.60,377.04 105.80,381.78 106.00,385.46 106.20,387.89 106.40,388.96 106.60,388.60 106.80,386.84 107.00,383.76 107.20,379.53 107.40,374.35 107.60,368.48 107.80,362.23 108.00,355.90 108.20,349.83 108.40,344.30 108.60,339.61 108.80,335.99 109.00,333.62 109.20,332.63 109.40,333.06 109.60,334.89 109.80,338.02 110.00,342.31 110.20,347.53 110.40,353.42 110.60,359.69 110.80,366.01 111.00,372.07 111.20,377.55 111.40,382.20 111.60,385.76 111.80,388.06 112.00,388.98 112.20,388.48 112.40,386.59 112.60,383.39 112.80,379.05 113.00,373.79 113.20,367.87 113.40,361.59 113.60,355.28 113.80,349.24 114.00,343.79 114.20,339.20 114.40,335.70 114.60,333.46 114.80,332.61 115.00,333.18 115.20,335.14 115.40,338.40 115.60,342.80 115.80,348.10 116.00,354.04 116.20,360.32 116.40,366.63 116.60,372.65 116.80,378.06 117.00,382.61 117.20,386.05 117.40,388.22 117.60,389.00 117.80,388.36 118.00,386.32 118.20,383.00 118.40,378.56 118.60,373.22 118.80,367.25 119.00,360.96 119.20,354.66 119.40,348.67 119.60,343.29 119.80,338.79 120.00,335.41 120.20,333.31 120.40,332.60 120.60,333.31 120.80,335.41 121.00,338.79 121.20,343.29 121.40,348.67 121.60,354.66 121.80,360.96 122.00,367.25 122.20,373.22 122.40,378.56 122.60,383.00 122.80,386.32 123.00,388.36 123.20,389.00 123.40,388.22 123.60,386.05 123.80,382.61 124.00,378.06 124.20,372.65 124.40,366.63 124.60,360.32 124.80,354.04 125.00,348.10 125.20,342.80 125.40,338.40 125.60,335.14 125.80,333.18 126.00,332.61 126.20,333.46 126.40,335.70 126.60,339.20 126.80,343.79 127.00,349.24 127.20,355.28 127.40,361.59 127.60,367.87 127.80,373.79 128.00,379.05 128.20,383.39 128.40,386.59 128.60,388.48 128.80,388.98 129.00,388.06 129.20,385.76 129.40,382.20 129.60,377.55 129.80,372.07 130.00,366.01 130.20,359.69 130.40,353.42 130.60,347.53 130.80,342.31 131.00,338.02 131.20,334.89 131.40,333.06 131.60,332.63 131.80,333.62 132.00,335.99 132.20,339.61 132.40,344.30 132.60,349.83 132.80,355.90 133.00,362.23 133.20,368.48 133.40,374.35 133.60,379.53 133.80,383.76 134.00,386.84 134.20,388.60 134.40,388.96 134.60,387.89 134.80,385.46 135.00,381.78 135.20,377.04 135.40,371.48 135.60,365.38 135.80,359.05 136.00,352.81 136.20,346.98 136.40,341.84 136.60,337.65 136.80,334.64 137.00,332.95 137.20,332.66 137.40,333.80 137.60,336.30 137.80,340.04 138.00,344.82 138.20,350.41 138.40,356.53 138.60,362.86 138.80,369.09 139.00,374.90 139.20,380.00 139.40,384.13 139.60,387.08 139.80,388.70 140.00,388.91 140.20,387.71 140.40,385.14 140.60,381.35 140.80,376.52 141.00,370.89 141.20,364.76 141.40,358.42 141.60,352.21 141.80,346.43 142.00,341.37 142.20,337.30 142.40,334.41 142.60,332.86 142.80,332.71 143.00,333.99 143.20,336.62 143.40,340.47 143.60,345.35 143.80,351.01 144.00,357.16 144.20,363.49 144.40,369.70 144.60,375.45 144.80,380.46 145.00,384.48 145.20,387.30 145.40,388.78 145.60,388.86 145.80,387.51 146.00,384.82 146.20,380.91 146.40,375.99 146.60,370.30 146.80,364.13 147.00,357.79 147.20,351.60 147.40,345.88 147.60,340.92 147.80,336.95 148.00,334.19 148.20,332.78 148.40,332.78 148.60,334.19 148.80,336.95 149.00,340.92 149.20,345.88 149.40,351.60 149.60,357.79 149.80,364.13 150.00,370.30 150.20,375.99 150.40,380.91 150.60,384.82 150.80,387.51 151.00,388.86 151.20,388.78 151.40,387.30 151.60,384.48 151.80,380.46 152.00,375.45 152.20,369.70 152.40,363.49 152.60,357.16 152.80,351.01 153.00,345.35 153.20,340.47 153.40,336.62 153.60,333.99 153.80,332.71 154.00,332.86 154.20,334.41 154.40,337.30 154.60,341.37 154.80,346.43 155.00,352.21 155.20,358.42 155.40,364.76 155.60,370.89 155.80,376.52 156.00,381.35 156.20,385.14 156.40,387.71 156.60,388.91 156.80,388.70 157.00,387.08 157.20,384.13 157.40,380.00 157.60,374.90 157.80,369.09 158.00,362.86 158.20,356.53 158.40,350.41 158.60,344.82 158.80,340.04 159.00,336.30 159.20,333.80 159.40,332.66 159.60,332.95 159.80,334.64 160.00,337.65 160.20,341.84 160.40,346.98 160.60,352.81 160.80,359.05 161.00,365.38 161.20,371.48 161.40,377.04 161.60,381.78 161.80,385.46 162.00,387.89 162.20,388.96 162.40,388.60 162.60,386.84 162.80,383.76 163.00,379.53 163.20,374.35 163.40,368.48 163.60,362.23 163.80,355.90 164.00,349.83 164.20,344.30 164.40,339.61 164.60,335.99 164.80,333.62 165.00,332.63 165.20,333.06 165.40,334.89 165.60,338.02 165.80,342.31 166.00,347.53 166.20,353.42 166.40,359.69 166.60,366.01 166.80,372.07 167.00,377.55 167.20,382.20 167.40,385.76 167.60,388.06 167.80,388.98 168.00,388.48 168.20,386.59 168.40,383.39 168.60,379.05 168.80,373.79 169.00,367.87 169.20,361.59 169.40,355.28 169.60,349.24 169.80,343.79 170.00,339.20 170.20,335.70 170.40,333.46 170.60,332.61 170.80,333.18 171.00,335.14 171.20,338.40 171.40,342.80 171.60,348.10 171.80,354.04 172.00,360.32 172.20,366.63 172.40,372.65 172.60,378.06 172.80,382.61 173.00,386.05 173.20,388.22 173.40,389.00 173.60,388.36 173.80,386.32 174.00,383.00 174.20,378.56 174.40,373.22 174.60,367.25 174.80,360.96 175.00,354.66 175.20,348.67 175.40,343.29 175.60,338.79 175.80,335.41 176.00,333.31 176.20,332.60 176.40,333.31 176.60,335.41 176.80,338.79 177.00,343.29 177.20,348.67 177.40,354.66 177.60,360.96 177.80,367.25 178.00,373.22 178.20,378.56 178.40,383.00 178.60,386.32 178.80,388.36 179.00,389.00 179.20,388.22 179.40,386.05 179.60,382.61 179.80,378.06 180.00,372.65 180.20,366.63 180.40,360.32 180.60,354.04 180.80,348.10 181.00,342.80 181.20,338.40 181.40,335.14 181.60,333.18 181.80,332.61 182.00,333.46 182.20,335.70 182.40,339.20 182.60,343.79 182.80,349.24 183.00,355.28 183.20,361.59 183.40,367.87 183.60,373.79 183.80,379.05 184.00,383.39 184.20,386.59 184.40,388.48 184.60,388.98 184.80,388.06 185.00,385.76 185.20,382.20 185.40,377.55 185.60,372.07 185.80,366.01 186.00,359.69 186.20,353.42 186.40,347.53 186.60,342.31 186.80,338.02 187.00,334.89 187.20,333.06 187.40,332.63 187.60,333.62 187.80,335.99 188.00,339.61 188.20,344.30 188.40,349.83 188.60,355.90 188.80,362.23 189.00,368.48 189.20,374.35 189.40,379.53 189.60,383.76 189.80,386.84 190.00,388.60 190.20,388.96 190.40,387.89 190.60,385.46 190.80,381.78 191.00,377.04 191.20,371.48 191.40,365.38 191.60,359.05 191.80,352.81 192.00,346.98 192.20,341.84 192.40,337.65 192.60,334.64 192.80,332.95 193.00,332.66 193.20,333.80 193.40,336.30 193.60,340.04 193.80,344.82 194.00,350.41 194.20,356.53 194.40,362.86 194.60,369.09 194.80,374.90 195.00,380.00 195.20,384.13 195.40,387.08 195.60,388.70 195.80,388.91 196.00,387.71 196.20,385.14 196.40,381.35 196.60,376.52 196.80,370.89 197.00,364.76 197.20,358.42 197.40,352.21 197.60,346.43 197.80,341.37 198.00,337.30 198.20,334.41 198.40,332.86 198.60,332.71 198.80,333.99 199.00,336.62 199.20,340.47 199.40,345.35 199.60,351.01 199.80,357.16 200.00,363.49 200.20,369.70 200.40,375.45 200.60,380.46 200.80,384.48 201.00,387.30 201.20,388.78 201.40,388.86 201.60,387.51 201.80,384.82 202.00,380.91 202.20,375.99 202.40,370.30 202.60,364.13 202.80,357.79 203.00,351.60 203.20,345.88 203.40,340.92 203.60,336.95 203.80,334.19 204.00,332.78 204.20,332.78 204.40,334.19 204.60,336.95 204.80,340.92 205.00,345.88 205.20,351.60 205.40,357.79 205.60,364.13 205.80,370.30 206.00,375.99 206.20,380.91 206.40,384.82 206.60,387.51 206.80,388.86 207.00,388.78 207.20,387.30 207.40,384.48 207.60,380.46 207.80,375.45 208.00,369.70 208.20,363.49 208.40,357.16 208.60,351.01 208.80,345.35 209.00,340.47 209.20,336.62 209.40,333.99 209.60,332.71 209.80,332.86 210.00,334.41 210.20,337.30 210.40,341.37" stroke="#30c8d0" stroke-width="0.9" fill="none"/><polyline points="88.00,339.40 88.20,344.05 88.40,349.53 88.60,355.59 88.80,361.91 89.00,368.18 89.20,374.07 89.40,379.29 89.60,383.58 89.80,386.71 90.00,388.54 90.20,388.97 90.40,387.98 90.60,385.61 90.80,381.99 91.00,377.30 91.20,371.77 91.40,365.70 91.60,359.37 91.80,353.12 92.00,347.25 92.20,342.07 92.40,337.84 92.60,334.76 92.80,333.00 93.00,332.64 93.20,333.71 93.40,336.14 93.60,339.82 93.80,344.56 94.00,350.12 94.20,356.22 94.40,362.55 94.60,368.79 94.80,374.62 95.00,379.76 95.20,383.95 95.40,386.96 95.60,388.65 95.80,388.94 96.00,387.80 96.20,385.30 96.40,381.56 96.60,376.78 96.80,371.19 97.00,365.07 97.20,358.74 97.40,352.51 97.60,346.70 97.80,341.60 98.00,337.47 98.20,334.52 98.40,332.90 98.60,332.69 98.80,333.89 99.00,336.46 99.20,340.25 99.40,345.08 99.60,350.71 99.80,356.84 100.00,363.18 100.20,369.39 100.40,375.17 100.60,380.23 100.80,384.30 101.00,387.19 101.20,388.74 101.40,388.89 101.60,387.61 101.80,384.98 102.00,381.13 102.20,376.25 102.40,370.59 102.60,364.44 102.80,358.11 103.00,351.90 103.20,346.15 103.40,341.14 103.60,337.12 103.80,334.30 104.00,332.82 104.20,332.74 104.40,334.09 104.60,336.78 104.80,340.69 105.00,345.61 105.20,351.30 105.40,357.47 105.60,363.81 105.80,370.00 106.00,375.72 106.20,380.68 106.40,384.65 106.60,387.41 106.80,388.82 107.00,388.82 107.20,387.41 107.40,384.65 107.60,380.68 107.80,375.72 108.00,370.00 108.20,363.81 108.40,357.47 108.60,351.30 108.80,345.61 109.00,340.69 109.20,336.78 109.40,334.09 109.60,332.74 109.80,332.82 110.00,334.30 110.20,337.12 110.40,341.14 110.60,346.15 110.80,351.90 111.00,358.11 111.20,364.44 111.40,370.59 111.60,376.25 111.80,381.13 112.00,384.98 112.20,387.61 112.40,388.89 112.60,388.74 112.80,387.19 113.00,384.30 113.20,380.23 113.40,375.17 113.60,369.39 113.80,363.18 114.00,356.84 114.20,350.71 114.40,345.08 114.60,340.25 114.80,336.46 115.00,333.89 115.20,332.69 115.40,332.90 115.60,334.52 115.80,337.47 116.00,341.60 116.20,346.70 116.40,352.51 116.60,358.74 116.80,365.07 117.00,371.19 117.20,376.78 117.40,381.56 117.60,385.30 117.80,387.80 118.00,388.94 118.20,388.65 118.40,386.96 118.60,383.95 118.80,379.76 119.00,374.62 119.20,368.79 119.40,362.55 119.60,356.22 119.80,350.12 120.00,344.56 120.20,339.82 120.40,336.14 120.60,333.71 120.80,332.64 121.00,333.00 121.20,334.76 121.40,337.84 121.60,342.07 121.80,347.25 122.00,353.12 122.20,359.37 122.40,365.70 122.60,371.77 122.80,377.30 123.00,381.99 123.20,385.61 123.40,387.98 123.60,388.97 123.80,388.54 124.00,386.71 124.20,383.58 124.40,379.29 124.60,374.07 124.80,368.18 125.00,361.91 125.20,355.59 125.40,349.53 125.60,344.05 125.80,339.40 126.00,335.84 126.20,333.54 126.40,332.62 126.60,333.12 126.80,335.01 127.00,338.21 127.20,342.55 127.40,347.81 127.60,353.73 127.80,360.01 128.00,366.32 128.20,372.36 128.40,377.81 128.60,382.40 128.80,385.90 129.00,388.14 129.20,388.99 129.40,388.42 129.60,386.46 129.80,383.20 130.00,378.80 130.20,373.50 130.40,367.56 130.60,361.28 130.80,354.97 131.00,348.95 131.20,343.54 131.40,338.99 131.60,335.55 131.80,333.38 132.00,332.60 132.20,333.24 132.40,335.28 132.60,338.60 132.80,343.04 133.00,348.38 133.20,354.35 133.40,360.64 133.60,366.94 133.80,372.93 134.00,378.31 134.20,382.81 134.40,386.19 134.60,388.29 134.80,389.00 135.00,388.29 135.20,386.19 135.40,382.81 135.60,378.31 135.80,372.93 136.00,366.94 136.20,360.64 136.40,354.35 136.60,348.38 136.80,343.04 137.00,338.60 137.20,335.28 137.40,333.24 137.60,332.60 137.80,333.38 138.00,335.55 138.20,338.99 138.40,343.54 138.60,348.95 138.80,354.97 139.00,361.28 139.20,367.56 139.40,373.50 139.60,378.80 139.80,383.20 140.00,386.46 140.20,388.42 140.40,388.99 140.60,388.14 140.80,385.90 141.00,382.40 141.20,377.81 141.40,372.36 141.60,366.32 141.80,360.01 142.00,353.73 142.20,347.81 142.40,342.55 142.60,338.21 142.80,335.01 143.00,333.12 143.20,332.62 143.40,333.54 143.60,335.84 143.80,339.40 144.00,344.05 144.20,349.53 144.40,355.59 144.60,361.91 144.80,368.18 145.00,374.07 145.20,379.29 145.40,383.58 145.60,386.71 145.80,388.54 146.00,388.97 146.20,387.98 146.40,385.61 146.60,381.99 146.80,377.30 147.00,371.77 147.20,365.70 147.40,359.37 147.60,353.12 147.80,347.25 148.00,342.07 148.20,337.84 148.40,334.76 148.60,333.00 148.80,332.64 149.00,333.71 149.20,336.14 149.40,339.82 149.60,344.56 149.80,350.12 150.00,356.22 150.20,362.55 150.40,368.79 150.60,374.62 150.80,379.76 151.00,383.95 151.20,386.96 151.40,388.65 151.60,388.94 151.80,387.80 152.00,385.30 152.20,381.56 152.40,376.78 152.60,371.19 152.80,365.07 153.00,358.74 153.20,352.51 153.40,346.70 153.60,341.60 153.80,337.47 154.00,334.52 154.20,332.90 154.40,332.69 154.60,333.89 154.80,336.46 155.00,340.25 155.20,345.08 155.40,350.71 155.60,356.84 155.80,363.18 156.00,369.39 156.20,375.17 156.40,380.23 156.60,384.30 156.80,387.19 157.00,388.74 157.20,388.89 157.40,387.61 157.60,384.98 157.80,381.13 158.00,376.25 158.20,370.59 158.40,364.44 158.60,358.11 158.80,351.90 159.00,346.15 159.20,341.14 159.40,337.12 159.60,334.30 159.80,332.82 160.00,332.74 160.20,334.09 160.40,336.78 160.60,340.69 160.80,345.61 161.00,351.30 161.20,357.47 161.40,363.81 161.60,370.00 161.80,375.72 162.00,380.68 162.20,384.65 162.40,387.41 162.60,388.82 162.80,388.82 163.00,387.41 163.20,384.65 163.40,380.68 163.60,375.72 163.80,370.00 164.00,363.81 164.20,357.47 164.40,351.30 164.60,345.61 164.80,340.69 165.00,336.78 165.20,334.09 165.40,332.74 165.60,332.82 165.80,334.30 166.00,337.12 166.20,341.14 166.40,346.15 166.60,351.90 166.80,358.11 167.00,364.44 167.20,370.59 167.40,376.25 167.60,381.13 167.80,384.98 168.00,387.61 168.20,388.89 168.40,388.74 168.60,387.19 168.80,384.30 169.00,380.23 169.20,375.17 169.40,369.39 169.60,363.18 169.80,356.84 170.00,350.71 170.20,345.08 170.40,340.25 170.60,336.46 170.80,333.89 171.00,332.69 171.20,332.90 171.40,334.52 171.60,337.47 171.80,341.60 172.00,346.70 172.20,352.51 172.40,358.74 172.60,365.07 172.80,371.19 173.00,376.78 173.20,381.56 173.40,385.30 173.60,387.80 173.80,388.94 174.00,388.65 174.20,386.96 174.40,383.95 174.60,379.76 174.80,374.62 175.00,368.79 175.20,362.55 175.40,356.22 175.60,350.12 175.80,344.56 176.00,339.82 176.20,336.14 176.40,333.71 176.60,332.64 176.80,333.00 177.00,334.76 177.20,337.84 177.40,342.07 177.60,347.25 177.80,353.12 178.00,359.37 178.20,365.70 178.40,371.77 178.60,377.30 178.80,381.99 179.00,385.61 179.20,387.98 179.40,388.97 179.60,388.54 179.80,386.71 180.00,383.58 180.20,379.29 180.40,374.07 180.60,368.18 180.80,361.91 181.00,355.59 181.20,349.53 181.40,344.05 181.60,339.40 181.80,335.84 182.00,333.54 182.20,332.62 182.40,333.12 182.60,335.01 182.80,338.21 183.00,342.55 183.20,347.81 183.40,353.73 183.60,360.01 183.80,366.32 184.00,372.36 184.20,377.81 184.40,382.40 184.60,385.90 184.80,388.14 185.00,388.99 185.20,388.42 185.40,386.46 185.60,383.20 185.80,378.80 186.00,373.50 186.20,367.56 186.40,361.28 186.60,354.97 186.80,348.95 187.00,343.54 187.20,338.99 187.40,335.55 187.60,333.38 187.80,332.60 188.00,333.24 188.20,335.28 188.40,338.60 188.60,343.04 188.80,348.38 189.00,354.35 189.20,360.64 189.40,366.94 189.60,372.93 189.80,378.31 190.00,382.81 190.20,386.19 190.40,388.29 190.60,389.00 190.80,388.29 191.00,386.19 191.20,382.81 191.40,378.31 191.60,372.93 191.80,366.94 192.00,360.64 192.20,354.35 192.40,348.38 192.60,343.04 192.80,338.60 193.00,335.28 193.20,333.24 193.40,332.60 193.60,333.38 193.80,335.55 194.00,338.99 194.20,343.54 194.40,348.95 194.60,354.97 194.80,361.28 195.00,367.56 195.20,373.50 195.40,378.80 195.60,383.20 195.80,386.46 196.00,388.42 196.20,388.99 196.40,388.14 196.60,385.90 196.80,382.40 197.00,377.81 197.20,372.36 197.40,366.32 197.60,360.01 197.80,353.73 198.00,347.81 198.20,342.55 198.40,338.21 198.60,335.01 198.80,333.12 199.00,332.62 199.20,333.54 199.40,335.84 199.60,339.40 199.80,344.05 200.00,349.53 200.20,355.59 200.40,361.91 200.60,368.18 200.80,374.07 201.00,379.29 201.20,383.58 201.40,386.71 201.60,388.54 201.80,388.97 202.00,387.98 202.20,385.61 202.40,381.99 202.60,377.30 202.80,371.77 203.00,365.70 203.20,359.37 203.40,353.12 203.60,347.25 203.80,342.07 204.00,337.84 204.20,334.76 204.40,333.00 204.60,332.64 204.80,333.71 205.00,336.14 205.20,339.82 205.40,344.56 205.60,350.12 205.80,356.22 206.00,362.55 206.20,368.79 206.40,374.62 206.60,379.76 206.80,383.95 207.00,386.96 207.20,388.65 207.40,388.94 207.60,387.80 207.80,385.30 208.00,381.56 208.20,376.78 208.40,371.19 208.60,365.07 208.80,358.74 209.00,352.51 209.20,346.70 209.40,341.60 209.60,337.47 209.80,334.52 210.00,332.90 210.20,332.69 210.40,333.89" stroke="#68e878" stroke-width="0.8" fill="none"/><polyline points="88,351.7 210,351.7" stroke="#70d050" stroke-width="1" fill="none" opacity="0.7"/><polyline points="210.50,336.56 211.00,338.27 211.50,340.26 212.00,342.51 212.50,345.00 213.00,347.68 213.50,350.54 214.00,353.52 214.50,356.60 215.00,359.74 215.50,362.89 216.00,366.02 216.50,369.08 217.00,372.04 217.50,374.87 218.00,377.52 218.50,379.96 219.00,382.16 219.50,384.10 220.00,385.74 220.50,387.08 221.00,388.09 221.50,388.75 222.00,389.07 222.50,389.04 223.00,388.65 223.50,387.91 224.00,386.84 224.50,385.44 225.00,383.73 225.50,381.74 226.00,379.49 226.50,377.00 227.00,374.32 227.50,371.46 228.00,368.48 228.50,365.40 229.00,362.26 229.50,359.11 230.00,355.98 230.50,352.92 231.00,349.96 231.50,347.13 232.00,344.48 232.50,342.04 233.00,339.84 233.50,337.90 234.00,336.26 234.50,334.92 235.00,333.91 235.50,333.25 236.00,332.93 236.50,332.96 237.00,333.35 237.50,334.09 238.00,335.16 238.50,336.56 239.00,338.27 239.50,340.26 240.00,342.51 240.50,345.00 241.00,347.68 241.50,350.54 242.00,353.52 242.50,356.60 243.00,359.74 243.50,362.89 244.00,366.02 244.50,369.08 245.00,372.04 245.50,374.87 246.00,377.52 246.50,379.96 247.00,382.16 247.50,384.10 248.00,385.74 248.50,387.08 249.00,388.09 249.50,388.75 250.00,389.07 250.50,389.04 251.00,388.65 251.50,387.91 252.00,386.84 252.50,385.44 253.00,383.73 253.50,381.74 254.00,379.49 254.50,377.00 255.00,374.32 255.50,371.46 256.00,368.48 256.50,365.40 257.00,362.26 257.50,359.11 258.00,355.98 258.50,352.92 259.00,349.96 259.50,347.13 260.00,344.48 260.50,342.04 261.00,339.84 261.50,337.90 262.00,336.26 262.50,334.92 263.00,333.91 263.50,333.25 264.00,332.93 264.50,332.96 265.00,333.35 265.50,334.09 266.00,335.16 266.50,336.56 267.00,338.27 267.50,340.26 268.00,342.51 268.50,345.00 269.00,347.68 269.50,350.54 270.00,353.52 270.50,356.60 271.00,359.74 271.50,362.89 272.00,366.02 272.50,369.08 273.00,372.04 273.50,374.87 274.00,377.52 274.50,379.96 275.00,382.16 275.50,384.10 276.00,385.74 276.50,387.08 277.00,388.09 277.50,388.75 278.00,389.07 278.50,389.04 279.00,388.65 279.50,387.91 280.00,386.84 280.50,385.44 281.00,383.73 281.50,381.74 282.00,379.49 282.50,377.00 283.00,374.32 283.50,371.46 284.00,368.48 284.50,365.40 285.00,362.26 285.50,359.11 286.00,355.98 286.50,352.92 287.00,349.96 287.50,347.13 288.00,344.48 288.50,342.04 289.00,339.84 289.50,337.90 290.00,336.26 290.50,334.92 291.00,333.91 291.50,333.25 292.00,332.93 292.50,332.96 293.00,333.35 293.50,334.09 294.00,335.16 294.50,336.56 295.00,338.27 295.50,340.26 296.00,342.51 296.50,345.00 297.00,347.68 297.50,350.54 298.00,353.52 298.50,356.60 299.00,359.74 299.50,362.89 300.00,366.02 300.50,369.08 301.00,372.04 301.50,374.87 302.00,377.52 302.50,379.96 303.00,382.16 303.50,384.10 304.00,385.74 304.50,387.08 305.00,388.09 305.50,388.75 306.00,389.07 306.50,389.04 307.00,388.65 307.50,387.91 308.00,386.84 308.50,385.44 309.00,383.73 309.50,381.74 310.00,379.49 310.50,377.00 311.00,374.32 311.50,371.46 312.00,368.48 312.50,365.40 313.00,362.26 313.50,359.11 314.00,355.98 314.50,352.92 315.00,349.96 315.50,347.13 316.00,344.48 316.50,342.04 317.00,339.84 317.50,337.90 318.00,336.26 318.50,334.92 319.00,333.91 319.50,333.25 320.00,332.93 320.50,332.96 321.00,333.35 321.50,334.09 322.00,335.16 322.50,336.56 323.00,338.27 323.50,340.26 324.00,342.51 324.50,345.00 325.00,347.68 325.50,350.54 326.00,353.52 326.50,356.60 327.00,359.74 327.50,362.89 328.00,366.02 328.50,369.08 329.00,372.04 329.50,374.87 330.00,377.52 330.50,379.96 331.00,382.16 331.50,384.10 332.00,385.74 332.50,387.08 333.00,388.09 333.50,388.75 334.00,389.07 334.50,389.04 335.00,388.65 335.50,387.91 336.00,386.84 336.50,385.44 337.00,383.73 337.50,381.74 338.00,379.49 338.50,377.00 339.00,374.32 339.50,371.46 340.00,368.48 340.50,365.40 341.00,362.26 341.50,359.11 342.00,355.98 342.50,352.92 343.00,349.96 343.50,347.13 344.00,344.48 344.50,342.04 345.00,339.84 345.50,337.90 346.00,336.26 346.50,334.92 347.00,333.91 347.50,333.25 348.00,332.93 348.50,332.96 349.00,333.35 349.50,334.09 350.00,335.16 350.50,336.56 351.00,338.27 351.50,340.26 352.00,342.51 352.50,345.00" stroke="#3ab8d0" stroke-width="1.4" fill="none"/><polyline points="210.50,343.48 211.00,341.13 211.50,339.03 212.00,337.21 212.50,335.68 213.00,334.48 213.50,333.60 214.00,333.08 214.50,332.90 215.00,333.08 215.50,333.60 216.00,334.48 216.50,335.68 217.00,337.21 217.50,339.03 218.00,341.13 218.50,343.48 219.00,346.05 219.50,348.81 220.00,351.72 220.50,354.75 221.00,357.85 221.50,361.00 222.00,364.15 222.50,367.25 223.00,370.28 223.50,373.19 224.00,375.95 224.50,378.52 225.00,380.87 225.50,382.97 226.00,384.79 226.50,386.32 227.00,387.52 227.50,388.40 228.00,388.92 228.50,389.10 229.00,388.92 229.50,388.40 230.00,387.52 230.50,386.32 231.00,384.79 231.50,382.97 232.00,380.87 232.50,378.52 233.00,375.95 233.50,373.19 234.00,370.28 234.50,367.25 235.00,364.15 235.50,361.00 236.00,357.85 236.50,354.75 237.00,351.72 237.50,348.81 238.00,346.05 238.50,343.48 239.00,341.13 239.50,339.03 240.00,337.21 240.50,335.68 241.00,334.48 241.50,333.60 242.00,333.08 242.50,332.90 243.00,333.08 243.50,333.60 244.00,334.48 244.50,335.68 245.00,337.21 245.50,339.03 246.00,341.13 246.50,343.48 247.00,346.05 247.50,348.81 248.00,351.72 248.50,354.75 249.00,357.85 249.50,361.00 250.00,364.15 250.50,367.25 251.00,370.28 251.50,373.19 252.00,375.95 252.50,378.52 253.00,380.87 253.50,382.97 254.00,384.79 254.50,386.32 255.00,387.52 255.50,388.40 256.00,388.92 256.50,389.10 257.00,388.92 257.50,388.40 258.00,387.52 258.50,386.32 259.00,384.79 259.50,382.97 260.00,380.87 260.50,378.52 261.00,375.95 261.50,373.19 262.00,370.28 262.50,367.25 263.00,364.15 263.50,361.00 264.00,357.85 264.50,354.75 265.00,351.72 265.50,348.81 266.00,346.05 266.50,343.48 267.00,341.13 267.50,339.03 268.00,337.21 268.50,335.68 269.00,334.48 269.50,333.60 270.00,333.08 270.50,332.90 271.00,333.08 271.50,333.60 272.00,334.48 272.50,335.68 273.00,337.21 273.50,339.03 274.00,341.13 274.50,343.48 275.00,346.05 275.50,348.81 276.00,351.72 276.50,354.75 277.00,357.85 277.50,361.00 278.00,364.15 278.50,367.25 279.00,370.28 279.50,373.19 280.00,375.95 280.50,378.52 281.00,380.87 281.50,382.97 282.00,384.79 282.50,386.32 283.00,387.52 283.50,388.40 284.00,388.92 284.50,389.10 285.00,388.92 285.50,388.40 286.00,387.52 286.50,386.32 287.00,384.79 287.50,382.97 288.00,380.87 288.50,378.52 289.00,375.95 289.50,373.19 290.00,370.28 290.50,367.25 291.00,364.15 291.50,361.00 292.00,357.85 292.50,354.75 293.00,351.72 293.50,348.81 294.00,346.05 294.50,343.48 295.00,341.13 295.50,339.03 296.00,337.21 296.50,335.68 297.00,334.48 297.50,333.60 298.00,333.08 298.50,332.90 299.00,333.08 299.50,333.60 300.00,334.48 300.50,335.68 301.00,337.21 301.50,339.03 302.00,341.13 302.50,343.48 303.00,346.05 303.50,348.81 304.00,351.72 304.50,354.75 305.00,357.85 305.50,361.00 306.00,364.15 306.50,367.25 307.00,370.28 307.50,373.19 308.00,375.95 308.50,378.52 309.00,380.87 309.50,382.97 310.00,384.79 310.50,386.32 311.00,387.52 311.50,388.40 312.00,388.92 312.50,389.10 313.00,388.92 313.50,388.40 314.00,387.52 314.50,386.32 315.00,384.79 315.50,382.97 316.00,380.87 316.50,378.52 317.00,375.95 317.50,373.19 318.00,370.28 318.50,367.25 319.00,364.15 319.50,361.00 320.00,357.85 320.50,354.75 321.00,351.72 321.50,348.81 322.00,346.05 322.50,343.48 323.00,341.13 323.50,339.03 324.00,337.21 324.50,335.68 325.00,334.48 325.50,333.60 326.00,333.08 326.50,332.90 327.00,333.08 327.50,333.60 328.00,334.48 328.50,335.68 329.00,337.21 329.50,339.03 330.00,341.13 330.50,343.48 331.00,346.05 331.50,348.81 332.00,351.72 332.50,354.75 333.00,357.85 333.50,361.00 334.00,364.15 334.50,367.25 335.00,370.28 335.50,373.19 336.00,375.95 336.50,378.52 337.00,380.87 337.50,382.97 338.00,384.79 338.50,386.32 339.00,387.52 339.50,388.40 340.00,388.92 340.50,389.10 341.00,388.92 341.50,388.40 342.00,387.52 342.50,386.32 343.00,384.79 343.50,382.97 344.00,380.87 344.50,378.52 345.00,375.95 345.50,373.19 346.00,370.28 346.50,367.25 347.00,364.15 347.50,361.00 348.00,357.85 348.50,354.75 349.00,351.72 349.50,348.81 350.00,346.05 350.50,343.48 351.00,341.13 351.50,339.03 352.00,337.21 352.50,335.68" stroke="#d4c040" stroke-width="1.4" fill="none"/><polyline points="352.5,343 353.5,349.7 391.6,349.7" stroke="#3ab8d0" stroke-width="1.5" fill="none"/><polyline points="352.5,336 353.5,334.9 391.6,334.9" stroke="#d8c040" stroke-width="1.5" fill="none"/><polyline points="210.5,340 210.5,384.5 353.5,384.5 353.5,392.9" stroke="#3cae28" stroke-width="1.3" fill="none"/><polyline points="353.5,392.9 391.2,392.9" stroke="#98a848" stroke-width="1.3" fill="none"/><polyline points="86,358.3 391.6,358.3" stroke="#f0f0f0" stroke-width="1.6" fill="none"/></svg><div class="yl" style="top:388.1px">0</div><div class="yl" style="top:353.0px">42</div><div class="yl" style="top:317.8px">84</div><div class="yl" style="top:282.7px">126</div><div class="yl" style="top:247.5px">168</div><div class="yl" style="top:212.4px">210</div><div class="yl" style="top:177.3px">252</div><div class="yl" style="top:142.1px">294</div><div class="yl" style="top:107.0px">336</div><div class="yl" style="top:71.8px">378</div><div class="yl" style="top:36.7px">420</div><div class="yr" style="top:388.1px">-1</div><div class="yr" style="top:356.2px">0</div><div class="yr" style="top:324.2px">1</div><div class="yr" style="top:292.3px">2</div><div class="yr" style="top:260.3px">3</div><div class="yr" style="top:228.4px">4</div><div class="yr" style="top:196.4px">5</div><div class="yr" style="top:164.5px">6</div><div class="yr" style="top:132.5px">7</div><div class="yr" style="top:100.6px">8</div><div class="yr" style="top:68.6px">9</div><div class="yr" style="top:36.7px">10</div><div class="xl" style="left:25.8px">0</div><div class="xl" style="left:44.8px">50</div><div class="xl" style="left:63.8px">100</div><div class="xl" style="left:82.7px">150</div><div class="xl" style="left:101.7px">200</div><div class="xl" style="left:120.7px">250</div><div class="xl" style="left:139.6px">300</div><div class="xl" style="left:158.6px">350</div><div class="xl" style="left:177.6px">400</div><div class="xl" style="left:196.6px">450</div><div class="xl" style="left:215.6px">500</div><div class="xl" style="left:234.5px">550</div><div class="xl" style="left:253.5px">600</div><div class="xl" style="left:272.5px">650</div><div class="xl" style="left:291.4px">700</div><div class="xl" style="left:310.4px">750</div><div class="xl" style="left:329.4px">800</div><div class="xl" style="left:348.4px">850</div><div class="xl" style="left:367.4px">900</div><div class="xl" style="left:386.3px">950</div><div class="xl" style="left:405.3px">1,000</div>
<!-- axis titles -->
<div class="abs" style="left:13.8px;top:216.4px;width:0;height:0"><div style="position:absolute;transform:translate(-50%,-50%) rotate(-90deg);white-space:nowrap;font-size:9.25px;font-weight:bold;color:#222;line-height:10px">High Val Data</div></div>
<div class="abs" style="left:443.5px;top:216px;width:0;height:0"><div style="position:absolute;transform:translate(-50%,-50%) rotate(90deg);white-space:nowrap;font-size:8.85px;font-weight:bold;color:#222;line-height:10px">Low Val Data</div></div>
<div class="abs" style="left:220.3px;top:410px;font-family:'Liberation Serif',serif;font-size:9.1px;font-weight:bold;color:#111;line-height:10px">Time</div>
<!-- right panel separator -->
<div class="abs" style="left:452px;top:17px;width:1px;height:517px;background:#e9e9e9"></div>
<!-- Channels group -->
<div class="grp" style="left:455.5px;top:36px;width:205px;height:251.5px"></div>
<div class="gt" style="left:459px;top:32px;background:#f0f0f0;padding:0 1px">Channels</div>
<div class="ch" style="top:59px"><div class="sw" style="background:#fff"></div><div class="cn">RAMP_REF_SPEED</div><div class="cb"></div><div class="hd">HIDE</div></div>
<div class="ch" style="top:87px"><div class="sw" style="background:#ee1111;border-color:#cc3333"></div><div class="cn">PLLTO_FLT_SPD_EST</div><div class="cb"></div><div class="hd">HIDE</div></div>
<div class="ch" style="top:115px"><div class="sw" style="background:#38b0e0;border-color:#70b8d8"></div><div class="cn">PIREG_VB_MEAS</div><div class="cb"></div><div class="hd">HIDE</div></div>
<div class="ch" style="top:143px"><div class="sw" style="background:#f4f00c;border-color:#d8d040"></div><div class="cn">PARKE_OUT_ID</div><div class="cb"></div><div class="hd">HIDE</div></div>
<div class="ch" style="top:171px"><div class="sw" style="background:#20e0f0;border-color:#50c8d8"></div><div class="cn">PARKE_OUT_IQ</div><div class="cb"></div><div class="hd">HIDE</div></div>
<div class="ch" style="top:199px"><div class="sw" style="background:#f8d0cc;border-color:#d8b8b4"></div><div class="cn">CLARK_INP_IU</div><div class="cb"></div><div class="hd">HIDE</div></div>
<div class="ch" style="top:227px"><div class="sw" style="background:#f88c10;border-color:#e09040"></div><div class="cn">CLARK_INP_IV</div><div class="cb"></div><div class="hd">HIDE</div></div>
<div class="ch" style="top:255px"><div class="sw" style="background:#fff"></div><div class="cn">CLARK_INP_IW</div><div class="cb"></div><div class="hd">HIDE</div></div>
<!-- Values group -->
<div class="grp" style="left:455.5px;top:306px;width:205px;height:97.5px"></div>
<div class="gt" style="left:459px;top:302.5px;background:#f0f0f0;padding:0 1px">Values</div>
<div class="lab" style="left:460.5px;top:314px">Input Voltage (V) :</div>
<div class="vb" style="left:460px;top:324.6px;width:96px;height:9.6px">400</div>
<div class="lab" style="left:558.8px;top:314px">Module Temperature (°C):</div>
<div class="vb" style="left:559.2px;top:324.6px;width:95.6px;height:9.6px">19</div>
<div class="lab" style="left:460.5px;top:337px">Phase Current (A):</div>
<div class="vb" style="left:460px;top:347px;width:96px;height:9.5px">5</div>
<div class="lab" style="left:558.8px;top:337px">Phase Voltage (V):</div>
<div class="vb" style="left:559.2px;top:346.8px;width:95.6px;height:9.5px">153</div>
<div class="lab" style="left:460.5px;top:359px">Speed (rpm):</div>
<div class="vb" style="left:460px;top:368.8px;width:96px;height:9.3px">921</div>
<div class="lab" style="left:558.8px;top:358.7px">Output Power (W):</div>
<div class="vb" style="left:559.2px;top:368.5px;width:95.6px;height:9.3px">2385</div>
<div class="lab" style="left:460.5px;top:380.5px">Bemf (V):</div>
<div class="vb" style="left:460px;top:391px;width:96px;height:9.3px">123</div>
<!-- Graph Properties -->
<div class="grp" style="left:455.5px;top:424px;width:204.5px;height:47px"></div>
<div class="gt" style="left:459px;top:420.5px;background:#f0f0f0;padding:0 1px">Graph Properties</div>
<div class="inp" style="left:461.5px;top:438px;width:31.5px;height:9px;font-size:5.4px">1000</div>
<div class="lab" style="left:495.3px;top:438.5px;font-size:5.3px">Graph Size</div>
<div class="lab" style="left:589px;top:438.3px">Create a File of read data</div>
<div class="btn" style="left:462.4px;top:452.5px;width:39.5px;height:12px;font-size:5.5px">RUN</div>
<div class="btn dis" style="left:504px;top:452.5px;width:40px;height:12px;font-size:5.8px">STOP</div>
<div class="btn" style="left:575.8px;top:452.4px;width:36.7px;height:12.2px;font-size:5.1px">SAVE</div>
<div class="btn dis" style="left:615px;top:452.4px;width:37.5px;height:12.2px;font-size:4.9px">CLOSE FILE</div>
<!-- Serial COM -->
<div class="grp" style="left:455.5px;top:490px;width:204.5px;height:44px;border-bottom:none"></div>
<div class="gt" style="left:459px;top:486px;background:#f0f0f0;padding:0 1px">Serial COM</div>
<div class="btn dis" style="background:#d8d8d8;left:485.8px;top:507.7px;width:45.2px;height:17px;text-align:left;padding-left:2px;line-height:12px;font-size:5.5px">COM4<span style="position:absolute;left:38px;top:5.5px;width:0;height:0;border-left:1.8px solid transparent;border-right:1.8px solid transparent;border-top:2.2px solid #aaa"></span></div>
<div class="btn dis" style="background:#d8d8d8;left:535px;top:507.7px;width:45.7px;height:17px;line-height:12px">CONNECT</div>
<div class="btn" style="left:584px;top:507.7px;width:45px;height:17px;line-height:12px;color:#555">CLOSE COM</div>
<div class="abs" style="left:617.4px;top:526.2px;font-size:5.7px;font-weight:bold;color:#333;line-height:8px"><span style="position:absolute;left:-5px">_</span>Connected.</div>
<!-- tabs -->
<div class="abs" style="left:3px;top:452px;width:445px;height:81px;background:#fff;border-top:1px solid #ececec"></div>
<div class="abs" style="left:8.4px;top:443.2px;width:66px;height:10px;background:#fff;border:1px solid #e6e6e6;border-bottom:none"></div>
<div class="abs tb" style="left:14.4px;top:444.5px;font-size:5.6px;font-weight:bold;color:#222;line-height:8px">SERIAL CMD - SEND</div>
<div class="abs" style="left:74.3px;top:444.6px;width:79px;height:7.5px;background:#ececec;border:1px solid #e8e8e8;border-bottom:none"></div>
<div class="abs tb" style="left:81.4px;top:445px;font-size:5.6px;font-weight:bold;color:#222;line-height:8px">CONTROL Configuration</div>
<!-- spinboxes -->
<div class="inp" style="left:75.4px;top:481.8px;width:116.8px;height:12.4px;line-height:11px;border-color:#c8c8c8;padding-right:8.4px">200</div>
<div class="inp" style="left:75.4px;top:494.4px;width:116.8px;height:12px;line-height:11px;border-color:#c8c8c8;padding-right:8.4px">10</div>
<div class="abs" style="left:183.4px;top:482.6px;width:7.8px;height:11px;background:#e8e8e8"><div class="abs" style="left:2.9px;top:1.6px;width:2.2px;height:2.2px;border-radius:50%;background:#555"></div><div class="abs" style="left:2.9px;top:5.5px;width:2.2px;height:2.2px;border-radius:50%;background:#555"></div></div>
<div class="abs" style="left:183.4px;top:495.2px;width:7.8px;height:10.6px;background:#e8e8e8"><div class="abs" style="left:2.9px;top:1.6px;width:2.2px;height:2.2px;border-radius:50%;background:#555"></div><div class="abs" style="left:2.9px;top:5.8px;width:2.2px;height:2.2px;border-radius:50%;background:#555"></div></div>
<div class="btn" style="left:75.4px;top:506.2px;width:116.8px;height:14.5px;line-height:14px;font-size:4.95px">SEND REF VALUE</div>
<div class="btn" style="left:253.5px;top:482.9px;width:127.5px;height:9.6px;text-align:left;padding-left:1px;line-height:9px;font-size:5.1px;background:#e0e0e0">RPM/second<span style="position:absolute;left:120px;top:1.8px;width:0;height:0;border-left:2.2px solid transparent;border-right:2.2px solid transparent;border-top:2.6px solid #333"></span></div>
<div class="btn" style="left:253.5px;top:495.2px;width:127.5px;height:9.4px;text-align:left;padding-left:1px;line-height:9px;font-size:5.1px;background:#e0e0e0">RPM<span style="position:absolute;left:120px;top:2.4px;width:0;height:0;border-left:2.2px solid transparent;border-right:2.2px solid transparent;border-top:2.6px solid #333"></span></div>
<div class="btn" style="left:253.5px;top:506.4px;width:127.5px;height:15.8px;line-height:15px;font-size:5.35px;color:#e02020">STOP MOTOR (default deceleration)</div>
<!-- bottom line -->
<div class="abs" style="left:2px;top:533px;width:43px;height:1.5px;background:#d8d8d8"></div>
<div class="abs" style="left:45px;top:533px;width:619px;height:2px;background:#3a3a3a"></div>
<!-- watermark -->
<div class="abs" style="left:484px;top:511.2px;font-size:21px;line-height:22px;color:rgba(165,222,165,0.8);-webkit-text-stroke:0.8px rgba(95,172,95,0.55);letter-spacing:-0.2px;transform:scaleX(0.925);transform-origin:0 0;white-space:nowrap">www.cntronics.com</div>
</div></body></html>
